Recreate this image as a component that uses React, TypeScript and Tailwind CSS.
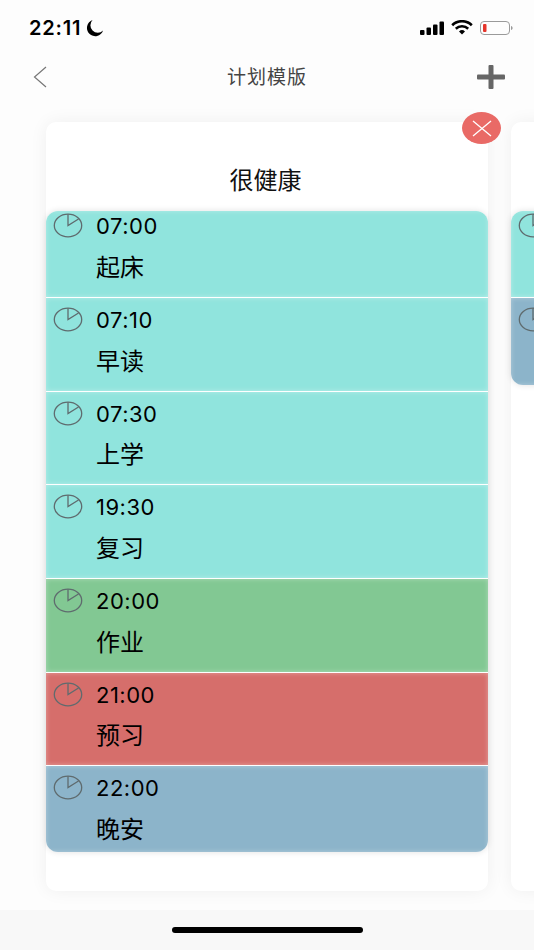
const plans = [
  { time: '07:00', name: '起床', color: 'bg-[#90e4dd]', size: 'h-[86px] pt-[2px]' },
  { time: '07:10', name: '早读', color: 'bg-[#90e4dd]', size: 'h-[92.7px] pt-[9px]' },
  { time: '07:30', name: '上学', color: 'bg-[#90e4dd]', size: 'h-[92.7px] pt-[9px]' },
  { time: '19:30', name: '复习', color: 'bg-[#90e4dd]', size: 'h-[92.7px] pt-[9px]' },
  { time: '20:00', name: '作业', color: 'bg-[#82c893]', size: 'h-[92.7px] pt-[9px]' },
  { time: '21:00', name: '预习', color: 'bg-[#d66e6b]', size: 'h-[92.7px] pt-[9px]' },
  { time: '22:00', name: '晚安', color: 'bg-[#8cb4ca]', size: 'h-[86px] pt-[9px]' },
];

function ClockIcon() {
  return (
    <svg width="30" height="25" viewBox="0 0 30 25" fill="none" stroke="#5f6b6e" strokeWidth="1.3" className="shrink-0">
      <ellipse cx="15" cy="12.5" rx="13.7" ry="11.3" />
      <path d="M15 1.200v11.300l10.500-6.500" />
    </svg>
  );
}

function StatusBar() {
  return (
    <div className="flex items-center justify-between h-[54px] pl-[29px] pr-[20px] pt-[1px]">
      <div className="flex items-center gap-[5px]">
        <span
          className="text-[20px] font-semibold leading-none tracking-[0.8px] text-black"
          style={{ fontFamily: 'Inter, sans-serif' }}
        >
          22:11
        </span>
        <svg width="18" height="18" viewBox="0 0 17 17" fill="#000">
          <path d="M6.2 1a7.800 7.800 0 1 0 9.900 9.900A7 7 0 0 1 6.200 1z" />
        </svg>
      </div>
      <div className="flex items-center gap-[6px]">
        <svg width="25" height="14" viewBox="0 0 25 14" fill="#000">
          <rect x="0" y="9" width="4.5" height="5" rx="1" />
          <rect x="6.5" y="6.5" width="4.5" height="7.5" rx="1" />
          <rect x="13" y="3.5" width="4.5" height="10.5" rx="1" />
          <rect x="19.5" y="0.5" width="4.5" height="13.5" rx="1" />
        </svg>
        <svg width="22" height="15" viewBox="0 0 22 15" fill="none" stroke="#000" strokeWidth="2.6">
          <path d="M1.2 5.2a14 14 0 0 1 19.6 0" />
          <path d="M4.8 8.8a9 9 0 0 1 12.4 0" />
          <path d="M11 14.6l-3-3.2a4.3 4.3 0 0 1 6 0z" fill="#000" stroke="none" />
        </svg>
        <svg width="34" height="14" viewBox="0 0 34 14" fill="none" className="ml-[1px]">
          <rect x="0.5" y="0.5" width="29" height="13" rx="3.5" stroke="#9a9a9a" />
          <rect x="3" y="3" width="3.5" height="8" rx="1" fill="#e5352b" />
          <path d="M31 5v4c1-.3 1.6-1 1.6-2S32 5.300 31 5z" fill="#9a9a9a" />
        </svg>
      </div>
    </div>
  );
}

function Header() {
  return (
    <div className="flex items-center justify-between h-[46px] pl-[33px] pr-[29px]">
      <div className="w-[28px]">
        <svg width="14" height="22" viewBox="0 0 14 22" fill="none" stroke="#777" strokeWidth="1.200">
          <path d="M13 1L1.500 11 13 21" />
        </svg>
      </div>
      <span className="mr-[4px] mb-[4px] text-[#444] text-[19px] tracking-[1px] leading-none">计划模版</span>
      <svg width="28" height="24" viewBox="0 0 28 24" fill="#666">
        <rect x="0" y="9.500" width="28" height="5" rx="1" />
        <rect x="11.500" y="0" width="5" height="24" rx="1" />
      </svg>
    </div>
  );
}

function PlanRow({ time, name, color, size }: { time: string; name: string; color: string; size: string }) {
  return (
    <div className={`flex pl-[7px] shadow-[inset_0_0_5px_rgba(255,255,255,0.35)] ${color} ${size}`}>
      <ClockIcon />
      <div className="ml-[13px] text-black">
        <div className="text-[22px] leading-[26px] tracking-[0.5px]" style={{ fontFamily: 'Inter, sans-serif' }}>
          {time}
        </div>
        <div className="mt-[13.5px] text-[24px] leading-[26px]">{name}</div>
      </div>
    </div>
  );
}

export default function App() {
  return (
    <div
      className="flex flex-col h-[950px] w-[534px] overflow-hidden bg-[#fdfdfd]"
      style={{ fontFamily: '"Noto Sans CJK SC", sans-serif' }}
    >
      <StatusBar />
      <Header />
      <div className="flex-1 flex gap-[23px] pl-[46px] pt-[22px] overflow-hidden">
        {/* main card */}
        <div className="relative w-[442px] h-[769px] shrink-0 rounded-[10px] bg-white shadow-[0_0_18px_rgba(0,0,0,0.06)]">
          <div className="h-[89px] pt-[43px] pr-[3px] text-center text-[24px] leading-[28px] text-[#111]">很健康</div>
          <div className="flex flex-col gap-[1px] overflow-hidden rounded-[12px] shadow-[0_0_6px_rgba(0,0,0,0.12)]">
            {plans.map((p) => (
              <PlanRow key={p.time} {...p} />
            ))}
          </div>
          <button className="absolute -top-[10px] -right-[13px] flex items-center justify-center w-[39px] h-[32px] rounded-[50%] bg-[#e96a66]">
            <svg width="20" height="17" viewBox="0 0 20 17" stroke="#fff" strokeWidth="1.300">
              <path d="M1 1l18 15M19 1L1 16" />
            </svg>
          </button>
        </div>

        {/* next card, cut off by the screen edge */}
        <div className="w-[442px] h-[769px] shrink-0 rounded-[10px] bg-white shadow-[0_0_18px_rgba(0,0,0,0.06)]">
          <div className="h-[89px]" />
          <div className="flex flex-col gap-[1px] overflow-hidden rounded-[12px] shadow-[0_0_6px_rgba(0,0,0,0.12)]">
            <PlanRow time="" name="" color="bg-[#90e4dd]" size="h-[86px] pt-[2px]" />
            <PlanRow time="" name="" color="bg-[#8cb4ca]" size="h-[87px] pt-[9px]" />
          </div>
        </div>
      </div>
      <div className="flex items-center justify-center h-[40px] shrink-0 bg-[#f8f8f8]">
        <div className="h-[6px] w-[191px] rounded-full bg-black" />
      </div>
    </div>
  );
}
